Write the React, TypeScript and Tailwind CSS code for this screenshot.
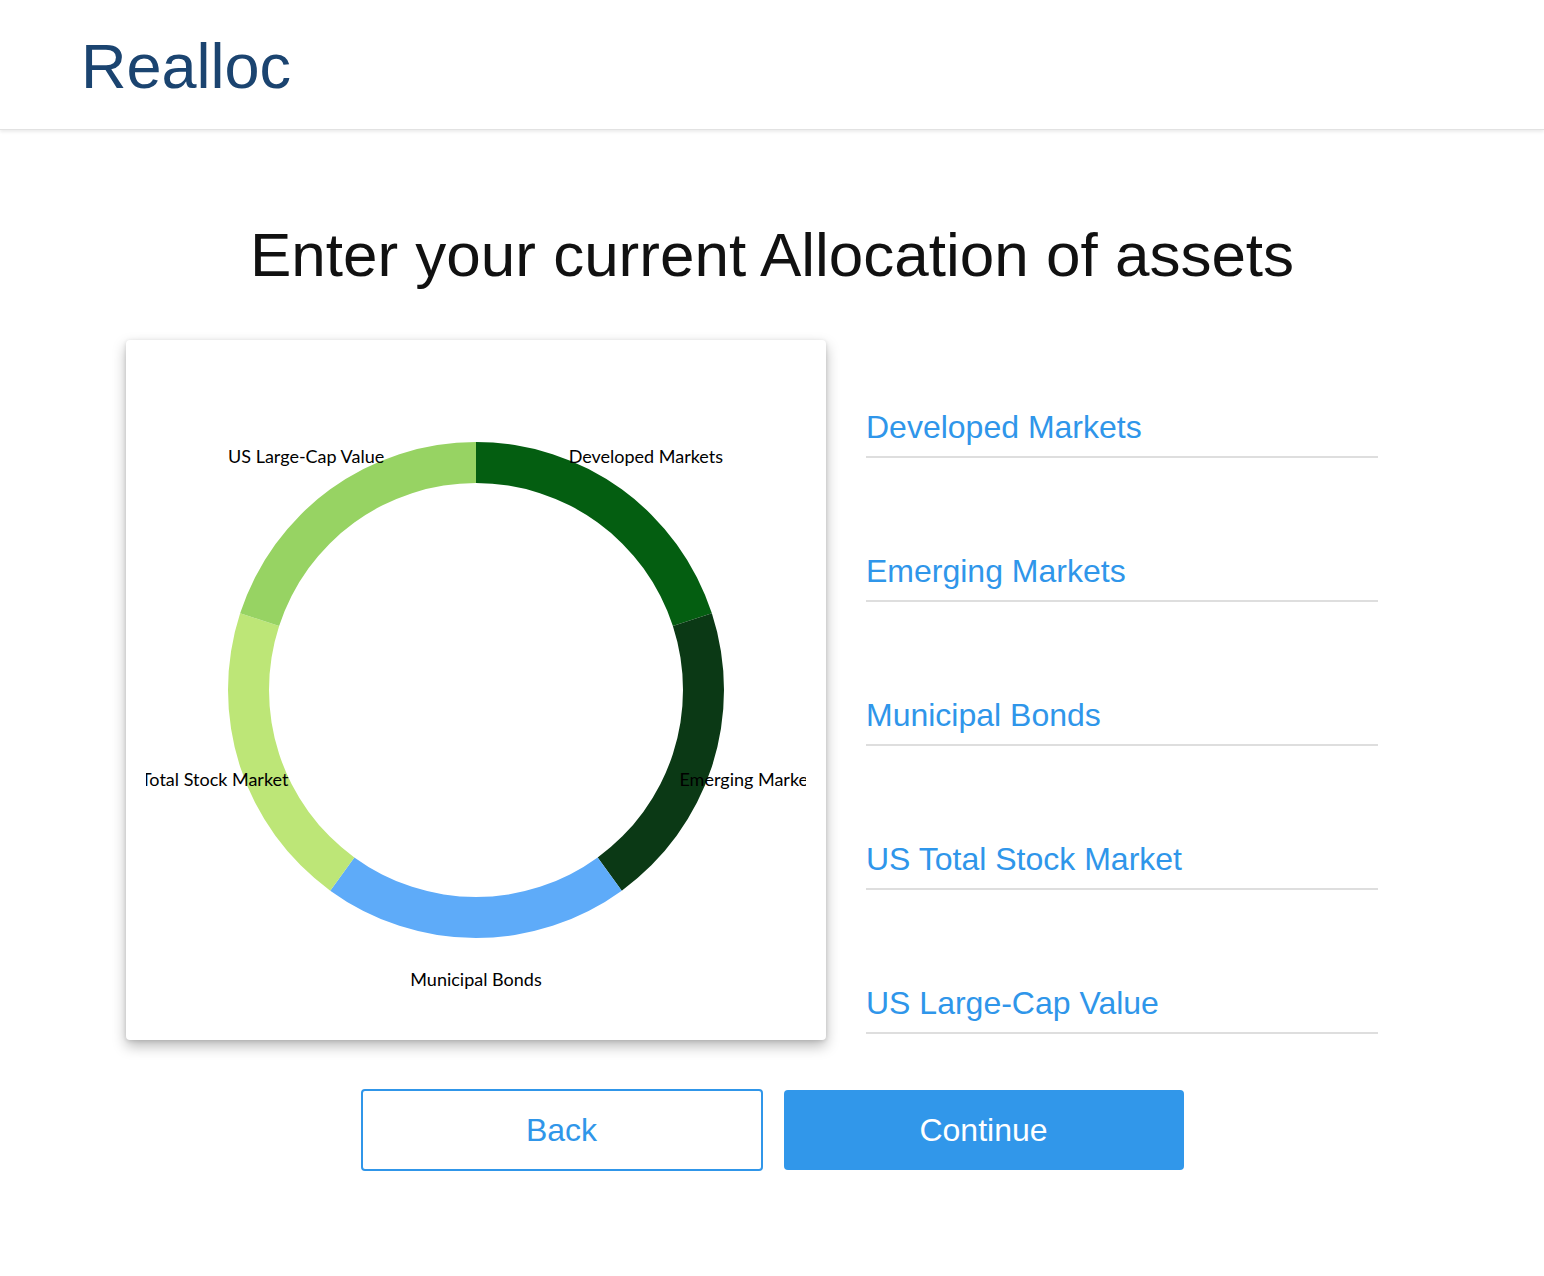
const segments = [
  { label: "Developed Markets", color: "#045e11" },
  { label: "Emerging Markets", color: "#0b3915" },
  { label: "Municipal Bonds", color: "#5eabf9" },
  { label: "US Total Stock Market", color: "#bde677" },
  { label: "US Large-Cap Value", color: "#97d363" },
];

const C = 330;
const R_OUT = 248;
const R_IN = 207;
const R_LABEL = 289;

function pt(deg: number, r: number) {
  const a = (deg * Math.PI) / 180;
  return [C + r * Math.sin(a), C - r * Math.cos(a)];
}

function arcPath(a0: number, a1: number) {
  const [x0, y0] = pt(a0, R_OUT);
  const [x1, y1] = pt(a1, R_OUT);
  const [x2, y2] = pt(a1, R_IN);
  const [x3, y3] = pt(a0, R_IN);
  return `M${x0} ${y0} A${R_OUT} ${R_OUT} 0 0 1 ${x1} ${y1} L${x2} ${y2} A${R_IN} ${R_IN} 0 0 0 ${x3} ${y3} Z`;
}

function Donut() {
  const step = 360 / segments.length;
  return (
    <svg width={660} height={660} viewBox="0 0 660 660" className="block overflow-hidden">
      {segments.map((s, i) => (
        <path key={s.label} d={arcPath(i * step, (i + 1) * step)} fill={s.color} />
      ))}
      {segments.map((s, i) => {
        const [x, y] = pt(i * step + step / 2, R_LABEL);
        return (
          <text
            key={s.label}
            x={x}
            y={y + 2}
            textAnchor="middle"
            dominantBaseline="middle"
            fontSize={18}
            fill="#000"
            style={{ fontFamily: "Lato, 'Open Sans', sans-serif" }}
          >
            {s.label}
          </text>
        );
      })}
    </svg>
  );
}

export default function App() {
  return (
    <div className="min-h-[1276px] bg-white font-['Liberation_Sans',Arial,sans-serif]">
      <header className="h-[130px] border-b border-[#e2e2e2] pl-[81px] pt-[35px] shadow-[0_2px_3px_rgba(0,0,0,0.08)]">
        <h1 className="text-[63px] leading-none text-[#1b4470]">Realloc</h1>
      </header>

      <h2 className="mt-[94px] text-center text-[62px] leading-none text-[#111]">
        Enter your current Allocation of assets
      </h2>

      <div className="mt-[54px] flex pl-[126px]">
        <div className="h-[700px] w-[700px] rounded-sm bg-white p-[20px] shadow-[0_6px_14px_rgba(0,0,0,0.28),0_1px_4px_rgba(0,0,0,0.12)]">
          <Donut />
        </div>

        <div className="ml-[40px] flex w-[512px] flex-col">
          {segments.map((s, i) => (
            <div
              key={s.label}
              className={i === 0 ? "flex h-[118px] flex-col justify-end" : "flex h-[144px] flex-col justify-end"}
            >
              <div className="border-b-2 border-[#dedede] pb-[13px] text-[32px] leading-none text-[#2f96ea]">
                {s.label}
              </div>
            </div>
          ))}
        </div>
      </div>

      <div className="mt-[49px] flex items-center justify-center gap-[21px]">
        <button className="flex h-[82px] w-[402px] items-center justify-center rounded-[4px] border-2 border-[#3096e9] bg-white text-[32px] text-[#3096e9]">
          Back
        </button>
        <button className="flex h-[80px] w-[400px] items-center justify-center rounded-[4px] bg-[#3197ea] text-[32px] text-white">
          Continue
        </button>
      </div>
    </div>
  );
}
